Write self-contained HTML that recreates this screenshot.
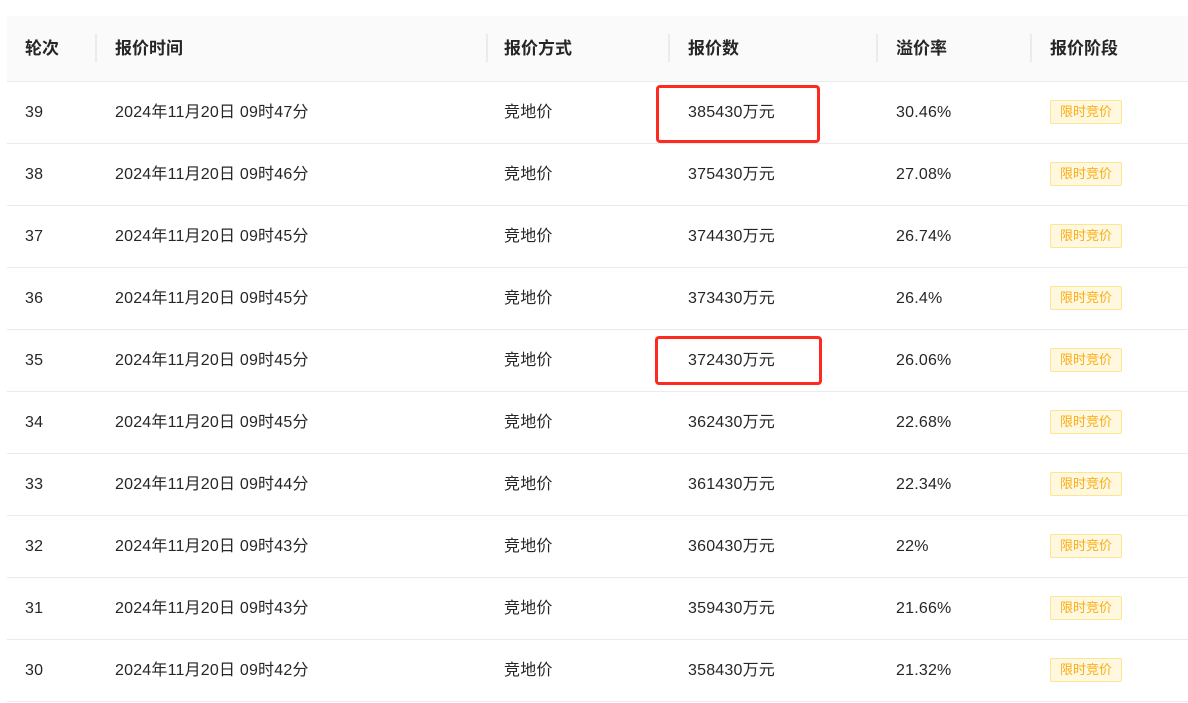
<!DOCTYPE html>
<html><head><meta charset="utf-8"><style>
body{margin:0;background:#fff;width:1188px;height:703px;overflow:hidden;font-family:"Liberation Sans","Noto Sans CJK SC",sans-serif;color:#262626;position:relative}
.hd{position:absolute;left:7px;top:16px;width:1181px;height:65px;background:#fafafa;border-bottom:1px solid #ebebeb}
.h{position:absolute;top:16px;height:65px;line-height:65px;font-size:17px;font-weight:bold;color:#262626}
.dv{position:absolute;top:34px;width:2px;height:28px;background:#ebebeb}
.row{position:absolute;left:7px;width:1181px;height:61px;border-bottom:1px solid #ebebeb}
.c{position:absolute;top:0;line-height:61px;font-size:16px;letter-spacing:0.2px}
.tag{position:absolute;left:1043px;top:18px;width:70px;height:22px;line-height:22px;text-align:center;background:#fff8e1;border:1px solid #ffe58f;border-radius:2px;color:#faad14;font-size:13px}
.red{position:absolute;border:3px solid #ff2a1f;border-radius:4px;box-sizing:border-box}
</style></head><body>
<div class="hd"></div>
<div class="h" style="left:25px">轮次</div>
<div class="dv" style="left:95px"></div>
<div class="h" style="left:115px">报价时间</div>
<div class="dv" style="left:486px"></div>
<div class="h" style="left:504px">报价方式</div>
<div class="dv" style="left:668px"></div>
<div class="h" style="left:688px">报价数</div>
<div class="dv" style="left:876px"></div>
<div class="h" style="left:896px">溢价率</div>
<div class="dv" style="left:1030px"></div>
<div class="h" style="left:1050px">报价阶段</div>
<div id="rows"></div>
<script>
var d=[["39","47","385430","30.46%"],["38","46","375430","27.08%"],["37","45","374430","26.74%"],["36","45","373430","26.4%"],["35","45","372430","26.06%"],["34","45","362430","22.68%"],["33","44","361430","22.34%"],["32","43","360430","22%"],["31","43","359430","21.66%"],["30","42","358430","21.32%"]];
var h="";d.forEach(function(r,i){var t=82+i*62;h+='<div class="row" style="top:'+t+'px"><div class="c" style="left:18px">'+r[0]+'</div><div class="c" style="left:108px">2024年11月20日 09时'+r[1]+'分</div><div class="c" style="left:497px">竞地价</div><div class="c" style="left:681px">'+r[2]+'万元</div><div class="c" style="left:889px">'+r[3]+'</div><div class="tag">限时竞价</div></div>'});
document.getElementById("rows").innerHTML=h;
</script>
<div class="red" style="left:656px;top:85px;width:164px;height:58px"></div>
<div class="red" style="left:655px;top:336px;width:167px;height:49px"></div>
</body></html>
